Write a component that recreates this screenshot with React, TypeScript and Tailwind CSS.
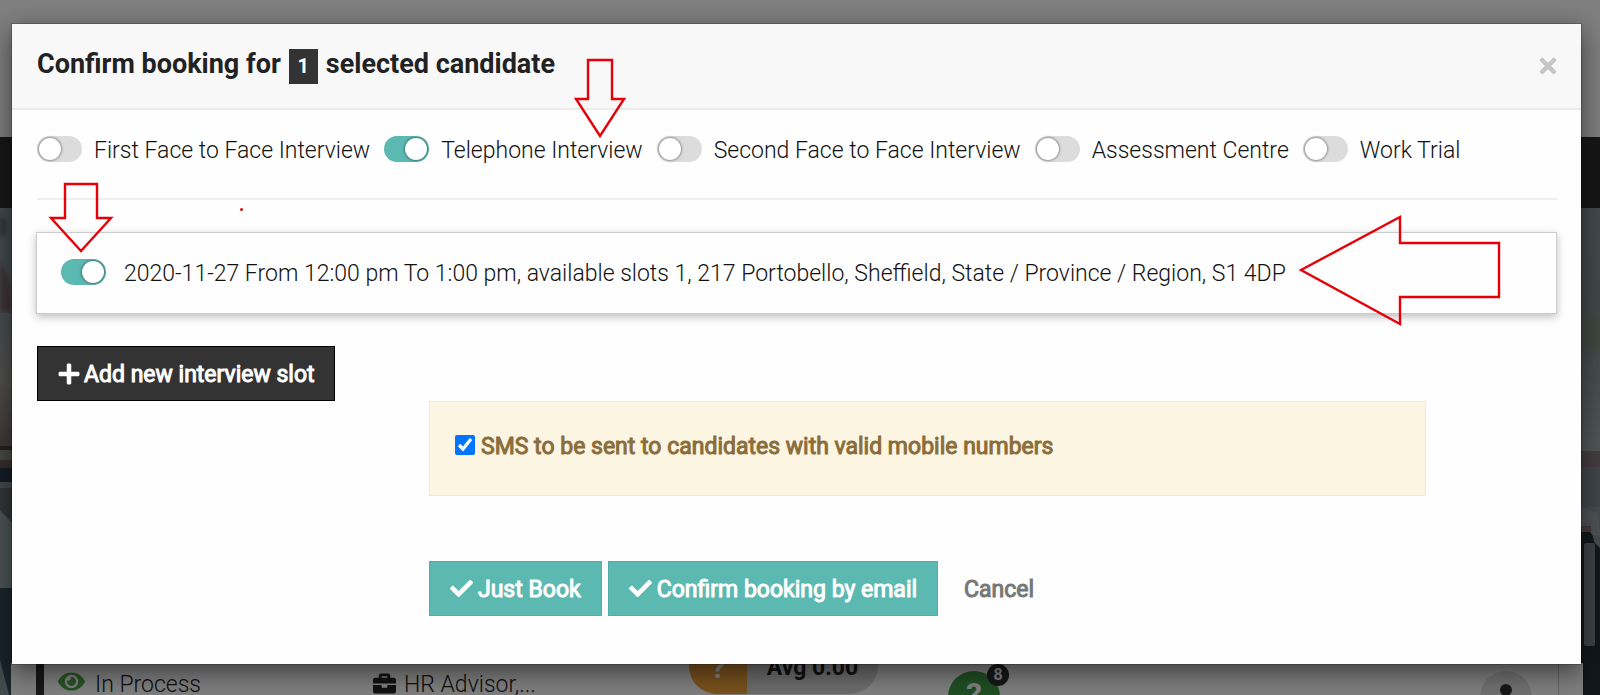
import { FaBriefcase, FaCheck, FaEye, FaPlus, FaTimes } from 'react-icons/fa';

const interviewTypes = [
  { id: 'first', label: 'First Face to Face Interview', on: false },
  { id: 'telephone', label: 'Telephone Interview', on: true },
  { id: 'second', label: 'Second Face to Face Interview', on: false },
  { id: 'assessment', label: 'Assessment Centre', on: false },
  { id: 'trial', label: 'Work Trial', on: false },
];

function Toggle({ id, on }: { id: string; on: boolean }) {
  return (
    <input
      id={id}
      type="checkbox"
      role="switch"
      defaultChecked={on}
      className="h-[26px] w-[45px] shrink-0 cursor-pointer appearance-none rounded-full bg-[#dcdcdc] p-[2px] before:block before:size-[22px] before:rounded-full before:bg-white before:shadow-[0_0_3px_rgba(0,0,0,0.7)] checked:bg-[#5bb9b1] checked:before:ml-auto"
    />
  );
}

function Arrow({ points, className }: { points: string; className: string }) {
  return (
    <svg className={`pointer-events-none absolute overflow-visible ${className}`} aria-hidden="true">
      <polygon points={points} fill="none" stroke="#e80009" strokeWidth="2.4" />
    </svg>
  );
}

// Office photo behind the list, only its edges are visible
function HeroPhoto() {
  return (
    <>
      <svg className="absolute left-0 top-0 h-[487px] w-3" viewBox="0 0 12 487" aria-hidden="true">
        <defs>
          <filter id="soft-left">
            <feGaussianBlur stdDeviation="2" />
          </filter>
          <linearGradient id="wall-left" x1="0" y1="0" x2="0" y2="1">
            <stop offset="0" stopColor="#8d9ba2" />
            <stop offset="0.5" stopColor="#a3a09c" />
            <stop offset="1" stopColor="#7b706c" />
          </linearGradient>
        </defs>
        <rect width="12" height="487" fill="#87949a" />
        <g filter="url(#soft-left)">
          <path d="M0 8q7 2 7 12t-7 8z" fill="#5f6a70" />
          <path d="M0 55q12 10 12 50H4L0 98z" fill="#7a686b" />
        </g>
        <path d="M0 105h12v135H0z" fill="url(#wall-left)" />
        <path d="M0 238h12v4H0z" fill="#4a423f" />
        <path d="M0 242h12v10H0z" fill="#8f9090" />
        <path d="M0 252h12v8H0z" fill="#6c5c59" />
        <path d="M0 260h12v14H0z" fill="#2c3b4a" />
        <path d="M0 274h12v6H0z" fill="#87949a" />
        <path d="M0 280h12v34H0z" fill="#676b6f" />
        <path d="M0 302l12 13v65H0z" fill="#9aa6a8" />
        <path d="M0 380h12v107H0z" fill="#354a58" />
        <path d="M0 452l9 35H0z" fill="#87949a" />
      </svg>
      <svg className="absolute right-0 top-0 h-[487px] w-5" viewBox="0 0 20 487" aria-hidden="true">
        <defs>
          <filter id="soft-right">
            <feGaussianBlur stdDeviation="6" />
          </filter>
          <linearGradient id="wall-right" x1="0" y1="0" x2="0" y2="1">
            <stop offset="0" stopColor="#87949a" />
            <stop offset="0.5" stopColor="#84908f" />
            <stop offset="1" stopColor="#a3adad" />
          </linearGradient>
        </defs>
        <rect width="20" height="487" fill="#8b989b" />
        <path d="M0 0h20v243H0z" fill="url(#wall-right)" />
        <ellipse cx="16" cy="126" rx="7" ry="18" fill="#7c8f76" filter="url(#soft-right)" />
        <path d="M0 243h20v16H0z" fill="#8a7d80" />
        <path d="M0 259h20v40H0z" fill="#7f8e94" />
        <path d="M0 299l18 6 2 22H0z" fill="#9ca5a6" />
        <path d="M0 318h11v6H0z" fill="#8c7675" />
        <path d="M0 324h10q3 2 4 10l6 6v147H0z" fill="#22303b" />
        <rect x="4" y="335" width="11" height="103" rx="2" fill="#7d858c" />
      </svg>
    </>
  );
}

function CandidatePage() {
  return (
    <div aria-hidden="true" className="absolute inset-0 flex flex-col overflow-hidden bg-white">
      <div className="h-[137px] shrink-0" />
      <div className="h-[71px] shrink-0 bg-[#2e2e2e]" />
      <div className="relative flex flex-1 flex-col justify-end pl-[11px] pr-[17px]">
        <HeroPhoto />
        <div className="relative h-[32px] bg-white pl-[25px] pr-6">
          <div className="flex h-full items-start border-l-8 border-r border-l-[#2e2e2e] border-r-[#ccc] pl-[14px] text-[23px] leading-[20px] font-light text-[#222]">
            <div className="flex h-full w-[315px] items-end gap-[10px]">
              <FaEye className="size-[27px] text-[#4ca64c]" />
              <span>In Process</span>
            </div>
            <div className="flex h-full w-[316px] items-end gap-2">
              <FaBriefcase className="size-[23px]" />
              <span>HR Advisor,...</span>
            </div>
            <div className="-mt-[33px] flex h-[64px] w-[189px] items-center overflow-hidden rounded-[28px] bg-[#d8d8d8] text-[23px] font-bold">
              <span className="flex h-full w-[58px] items-center justify-center bg-[#f0a23a] pt-[12px] text-[30px] font-bold text-white">?</span>
              <span className="flex-1 pt-[11px] text-center">Avg 0.00</span>
            </div>
            <div className="relative ml-[70px] mt-[8px] flex size-[52px] justify-center rounded-full bg-[#3f9e46] pt-[13px] text-[32px] font-bold text-white">
              ?
              <span className="absolute -right-[9px] -top-[7px] flex size-[22px] items-center justify-center rounded-full bg-[#2e2e2e] text-[16px]">8</span>
            </div>
            <div className="ml-auto mr-[26px] mt-[8px] flex size-[52px] justify-center rounded-full bg-[#e2e2e2] pt-[13px]">
              <span className="size-[12px] rounded-full bg-[#2e2e2e]" />
            </div>
          </div>
        </div>
      </div>
    </div>
  );
}

export default function App() {
  return (
    <div className="relative min-h-screen overflow-hidden font-[Roboto,sans-serif] text-[23px] text-[#111]">
      <CandidatePage />

      <div className="relative min-h-screen bg-black/50 pb-[30px] pl-[11px] pr-[18px] pt-[23px]">
        <div role="dialog" aria-labelledby="dialog-title" className="relative border border-black/20 bg-[#fefefe] bg-clip-padding shadow-[0_8px_24px_rgba(0,0,0,0.5)]">
          <header className="flex h-[86px] items-center justify-between border-b-2 border-[#ebebeb] bg-[#f8f8f8] pl-[25px] pr-[21px]">
            <h1 id="dialog-title" className="flex items-center gap-2 text-[27px] font-bold text-[#222]">
              <span className="pb-1">Confirm booking for</span>
              <span className="flex h-[35px] w-[29px] items-center justify-center bg-[#333] text-[20px] text-white">1</span>
              <span className="pb-1">selected candidate</span>
            </h1>
            <button type="button" aria-label="Close" className="text-[#c6c6c6]">
              <FaTimes className="size-6" />
            </button>
          </header>

          <div className="pb-12 pl-[25px] pr-6">
            <div className="flex h-[90px] items-start gap-[14px] border-b-2 border-[#efefef] pt-[26px] font-light">
              {interviewTypes.map((type) => (
                <div key={type.id} className="flex items-start gap-3">
                  <Toggle id={type.id} on={type.on} />
                  <label htmlFor={type.id} className="leading-[30px] whitespace-nowrap">{type.label}</label>
                </div>
              ))}
            </div>

            <div className="-ml-px mt-8 flex h-[82px] items-start gap-[18px] border border-[#ccc] px-6 pt-[26px] font-light shadow-[0_3px_8px_rgba(0,0,0,0.25)]">
              <Toggle id="slot" on />
              <label htmlFor="slot" className="leading-[30px] whitespace-nowrap">
                2020-11-27 From 12:00 pm To 1:00 pm, available slots 1, 217 Portobello, Sheffield, State / Province / Region, S1 4DP
              </label>
            </div>

            <button type="button" className="mt-8 flex h-[55px] items-center gap-[3px] border border-black bg-[#333] px-[19px] pt-1 font-normal text-white [-webkit-text-stroke:1px]">
              <FaPlus className="mb-1 size-6" />
              Add new interview slot
            </button>

            <div className="ml-[392px] mr-[131px] flex h-[95px] items-center gap-[6px] border border-[#f5e9cc] bg-[#fcf5e1] px-[25px] pb-[2px] font-normal text-[#8a6d3b] [-webkit-text-stroke:1px]">
              <input id="sms" type="checkbox" defaultChecked className="mb-[6px] size-5 accent-[#0075ff]" />
              <label htmlFor="sms">SMS to be sent to candidates with valid mobile numbers</label>
            </div>

            <div className="ml-[392px] mt-[65px] flex gap-[6px] font-normal text-white [-webkit-text-stroke:1px]">
              <button type="button" className="flex h-[55px] items-center gap-[5px] border border-[#51ada5] bg-[#5bb9b1] px-5 pt-1">
                <FaCheck className="mb-1 size-[23px]" />
                Just Book
              </button>
              <button type="button" className="flex h-[55px] items-center gap-[5px] border border-[#51ada5] bg-[#5bb9b1] px-5 pt-1">
                <FaCheck className="mb-1 size-[23px]" />
                Confirm booking by email
              </button>
              <button type="button" className="px-5 pt-1 text-[#777]">Cancel</button>
            </div>
          </div>

          {/* Help annotations */}
          <Arrow className="left-[563px] top-[36px] h-[77px] w-[50px]" points="13,0 37,0 37,39 49,39 25,76 1,39 13,39" />
          <Arrow className="left-[38px] top-[160px] h-[68px] w-[62px]" points="15,0 47,0 47,34 61,34 31,67 1,34 15,34" />
          <Arrow className="right-[81px] top-[192px] h-[110px] w-[200px]" points="1,54 100,1 100,27 199,27 199,81 100,81 100,108" />
          <span className="absolute left-[228px] top-[184px] size-[3px] rounded-full bg-[#e80009]" />
        </div>
      </div>
    </div>
  );
}
